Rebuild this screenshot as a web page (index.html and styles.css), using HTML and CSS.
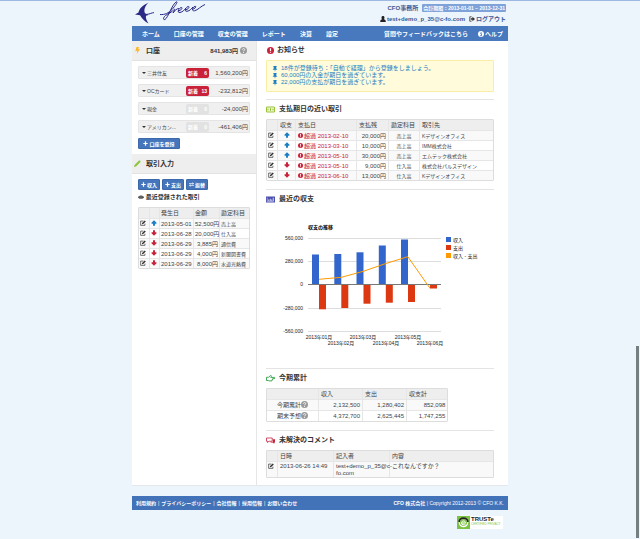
FILE: index.html
```html
<!doctype html>
<html lang="ja">
<head>
<meta charset="utf-8">
<title>freee</title>
<link rel="stylesheet" href="styles.css">
</head>

<body>
<!-- アイコン -->
<svg class="sprite" width="0" height="0">
	<symbol id="i-help" viewBox="0 0 14 14"><circle cx="7" cy="7" r="7" fill="currentColor"/><path d="M4.6 5.4C4.7 2.4 9.5 2.5 9.4 5.3 9.3 7 7.1 6.8 7.1 8.6" fill="none" stroke="#fff" stroke-width="1.8"/><circle cx="7.1" cy="10.9" r="1.1" fill="#fff"/></symbol>
	<symbol id="i-info" viewBox="0 0 14 14"><circle cx="7" cy="7" r="7" fill="#fff"/><path d="M5.2 6h2.9v4.5M5 10.8h4.4M6.2 3.4h2" fill="none" stroke="#4878be" stroke-width="2"/></symbol>
	<symbol id="i-alert" viewBox="0 0 14 14"><circle cx="7" cy="7" r="7" fill="#c9213a"/><path d="M7 2.5v5.4M7 9.4v2.2" stroke="#fff" stroke-width="2.4"/></symbol>
	<symbol id="i-bolt" viewBox="0 0 14 14"><path d="M5 0h5L8.500 4.500 12 4 5.500 14 6.500 7.500 2.500 8.500z" fill="#fbb829"/></symbol>
	<symbol id="i-pencil" viewBox="0 0 14 14"><path d="M0 14l1-4L9.500 1.500C10.500.4 11.500.6 12.500 1.600c1 1 1 2 0 3L4 13z" fill="#8cc63f"/></symbol>
	<symbol id="i-edit" viewBox="0 0 14 14"><path d="M11.500 8.500V12.500H1.500V2.500H8" fill="none" stroke="#333" stroke-width="1.600"/><path d="M4.500 10l.5-3L11 1l2.500 2.500L7.500 9.500z" fill="#333"/></symbol>
	<symbol id="i-up" viewBox="0 0 14 14"><path d="M7 .5l6.500 6.500-1.500 2H9.300V13.500H4.700V9H2L.5 7z" fill="#1b7fc4"/></symbol>
	<symbol id="i-down" viewBox="0 0 14 14"><path d="M7 13.500l6.500-6.500-1.500-2H9.300V.5H4.700V5H2L.5 7z" fill="#c9213a"/></symbol>
	<symbol id="i-plus" viewBox="0 0 14 14"><path d="M7 1v12M1 7h12" stroke="#fff" stroke-width="3.400"/></symbol>
	<symbol id="i-swap" viewBox="0 0 14 14"><path d="M0 4.500h10M14 9.500H4" stroke="#fff" stroke-width="2"/><path d="M9.500 1l4.500 3.500L9.500 8zM4.500 6L0 9.500 4.500 13z" fill="#fff"/></symbol>
	<symbol id="i-eye" viewBox="0 0 14 14"><path d="M0 7.500C3 2.500 11 2.500 14 7.500 11 12.500 3 12.500 0 7.500z" fill="#333"/><circle cx="7" cy="7" r="3" fill="none" stroke="#fff" stroke-width=".8"/></symbol>
	<symbol id="i-pin" viewBox="0 0 14 14"><path d="M3 0h8v1.500H10V6l2.500 3H8L7 14 6 9H1.500L4 6V1.500H3z" fill="#1b7fc4"/></symbol>
	<symbol id="i-user" viewBox="0 0 14 14"><path d="M7 0c4.500 0 4 6 1.800 7.500C12 8.200 13.500 9 13.500 14H.5C.5 9 2 8.200 5.200 7.500 3 6 2.500 0 7 0z" fill="#222"/></symbol>
	<symbol id="i-out" viewBox="0 0 14 14"><path d="M6 1.800H1.800v10.400H6" fill="none" stroke="#333" stroke-width="1.800"/><path d="M4 5h4V2l6 5-6 5V9H4z" fill="#333"/></symbol>
	<symbol id="i-money" viewBox="0 0 18 14"><path d="M1 2h16v10H1z" fill="#eef7d6" stroke="#9cc43a" stroke-width="2"/><path d="M9 4.500v5M4 5.500v3M14 5.500v3" fill="none" stroke="#8cb92c" stroke-width="2"/></symbol>
	<symbol id="i-chart" viewBox="0 0 18 14"><path d="M0 1h18v12H0z" fill="#4b4fae"/><path d="M2.500 3v8h13" fill="none" stroke="#c9cbee" stroke-width="1.200"/><path d="M5.500 10V7M8.500 10V5.500M11.500 10V7M14.500 10V3.500" stroke="#dfe0f6" stroke-width="1.800"/></symbol>
	<symbol id="i-hand" viewBox="0 0 18 14"><path d="M1 4.500h4L9 1.200c1.600-.6 2.200.8 1.500 2L9.500 4.800H17v2.600h-4v2.200h-1.200v2.200H6L4.500 11H1z" fill="none" stroke="#2fa044" stroke-width="1.800" stroke-linejoin="round"/></symbol>
	<symbol id="i-talk" viewBox="0 0 18 14"><path d="M1 2h11.500v6.500H6L3 11V8.500H1z" fill="none" stroke="#c9213a" stroke-width="1.600"/><path d="M14 4.500h4V11h-1.500v2.500L13 11H8.500l1.500-1.500h4z" fill="#c9213a"/></symbol>
</svg>

<div class="page">
	<div class="header">
		<a class="logo" href="#" aria-label="freee">
			<svg viewBox="0 0 72 24" width="72" height="24" fill="none" stroke="#2a2a86">
				<path d="M14.500 1.500C8.500 4.500 5 8 4.500 11.500L1 13.500l5 .8c2 3.500 5 6.500 8.500 8.200-2-3.500-3-5.500-2.500-7.800l2.500-.8-3.500-1.600C9.500 9 11 5 14.500 1.500z" fill="#2a2a86" stroke="none"/>
				<path d="M12 13.500c4-.3 6-2 8-1.800M26 13.500c5 .5 8.500-1.500 12-5C42 4 44 .5 42.500.8 38 3 34 17 31 18.500c-2 .8-2-2 .5-4C34 12.500 38 11.500 40 8.500c1.500-1 0 2-1 3.500 2-3 4-4.500 6-4.500"/>
				<path d="M44 10c4-.5 5-4 3-3.500-3 1.500-4 5.500-1 5 3-.5 4.500-3 6-4.500M51 9c4-.5 5-4 3-3.500-3 1.500-4 5-1 4.800 3-.3 4.500-3 6-4.300M58 8.500c4-1 4.500-3.500 3-3.200-3 1.200-3.500 5-.5 4.500C64 9 67 5 71 3.500"/>
			</svg>
		</a>
		<div class="account">
			<div class="account_line">
				<span class="office">CFO事務所</span>
				<span class="period">会計期間：2013-01-01 ~ 2013-12-31</span>
			</div>
			<div class="account_line">
				<a class="user" href="#"><svg class="icon"><use href="#i-user"/></svg> test+demo_p_35@c-fo.com</a>
				<a class="logout" href="#"><svg class="icon"><use href="#i-out"/></svg> ログアウト</a>
			</div>
		</div>
	</div>

	<div class="nav">
		<a href="#">ホーム</a>
		<a href="#">口座の管理</a>
		<a href="#">収支の管理</a>
		<a href="#">レポート</a>
		<a href="#">決算</a>
		<a href="#">設定</a>
		<a class="nav_right" href="#">質問やフィードバックはこちら</a>
		<a class="nav_help" href="#"><svg class="icon"><use href="#i-info"/></svg>ヘルプ</a>
	</div>

	<div class="main">
		<div class="sidebar">
			<h2 class="side_title"><svg class="icon_side"><use href="#i-bolt"/></svg>口座 <span class="total">841,983円</span><svg class="icon_help"><use href="#i-help"/></svg></h2>
			<div class="side_body">
				<ul class="accounts">
					<li><button class="toggle">三井住友</button><span class="new">新着 <b>6</b></span><span class="sum">1,560,200円</span></li>
					<li><button class="toggle">OCカード</button><span class="new">新着 <b>13</b></span><span class="sum">-232,812円</span></li>
					<li><button class="toggle">現金</button><span class="new none">新着 <b>0</b></span><span class="sum">-24,000円</span></li>
					<li><button class="toggle">アメリカン...</button><span class="new none">新着 <b>0</b></span><span class="sum">-461,406円</span></li>
				</ul>
				<button class="btn btn_add"><svg class="icon_btn"><use href="#i-plus"/></svg>口座を登録</button>
			</div>
			<h2 class="side_title"><svg class="icon_side"><use href="#i-pencil"/></svg>取引入力</h2>
			<div class="side_body">
				<div class="btns">
					<button class="btn"><svg class="icon_btn"><use href="#i-plus"/></svg>収入</button>
					<button class="btn"><svg class="icon_btn"><use href="#i-plus"/></svg>支出</button>
					<button class="btn"><svg class="icon_btn"><use href="#i-swap"/></svg>振替</button>
				</div>
				<h3 class="recent"><svg class="icon"><use href="#i-eye"/></svg> 最近登録された取引</h3>
				<table class="list">
					<colgroup><col class="c10"><col class="c10"><col class="c34"><col class="c26"><col></colgroup>
					<tr><th></th><th></th><th>発生日</th><th>金額</th><th>勘定科目</th></tr>
					<tr><td><svg class="icon"><use href="#i-edit"/></svg></td><td><svg class="icon"><use href="#i-up"/></svg></td><td>2013-05-01</td><td class="num">52,500円</td><td class="jp">売上高</td></tr>
					<tr><td><svg class="icon"><use href="#i-edit"/></svg></td><td><svg class="icon"><use href="#i-down"/></svg></td><td>2013-06-28</td><td class="num">20,000円</td><td class="jp">仕入高</td></tr>
					<tr><td><svg class="icon"><use href="#i-edit"/></svg></td><td><svg class="icon"><use href="#i-down"/></svg></td><td>2013-06-29</td><td class="num">3,885円</td><td class="jp">通信費</td></tr>
					<tr><td><svg class="icon"><use href="#i-edit"/></svg></td><td><svg class="icon"><use href="#i-down"/></svg></td><td>2013-06-29</td><td class="num">4,000円</td><td class="jp">新聞図書費</td></tr>
					<tr><td><svg class="icon"><use href="#i-edit"/></svg></td><td><svg class="icon"><use href="#i-down"/></svg></td><td>2013-06-29</td><td class="num">8,000円</td><td class="jp">水道光熱費</td></tr>
				</table>
			</div>
		</div>

		<div class="content">
			<div class="section">
				<h2 class="title"><svg class="icon_title small"><use href="#i-alert"/></svg>お知らせ</h2>
				<ul class="notice">
					<li><svg class="icon"><use href="#i-pin"/></svg><a href="#">18件が登録待ち：「自動で経理」から登録をしましょう。</a></li>
					<li><svg class="icon"><use href="#i-pin"/></svg><a href="#">60,000円の入金が期日を過ぎています。</a></li>
					<li><svg class="icon"><use href="#i-pin"/></svg><a href="#">22,000円の支払が期日を過ぎています。</a></li>
				</ul>
			</div>

			<div class="section">
				<h2 class="title"><svg class="icon_title"><use href="#i-money"/></svg>支払期日の近い取引</h2>
				<table class="list">
					<colgroup><col class="c10"><col class="c18"><col class="c61"><col class="c32"><col class="c31"><col></colgroup>
					<tr><th></th><th>収支</th><th>支払日</th><th>支払残</th><th>勘定科目</th><th>取引先</th></tr>
					<tr><td><svg class="icon"><use href="#i-edit"/></svg></td><td class="mid"><svg class="icon"><use href="#i-up"/></svg></td><td class="over"><svg class="icon"><use href="#i-alert"/></svg>超過 2013-02-10</td><td class="num">20,000円</td><td class="jp mid">売上高</td><td class="jp">Kデザインオフィス</td></tr>
					<tr><td><svg class="icon"><use href="#i-edit"/></svg></td><td class="mid"><svg class="icon"><use href="#i-up"/></svg></td><td class="over"><svg class="icon"><use href="#i-alert"/></svg>超過 2013-03-10</td><td class="num">10,000円</td><td class="jp mid">売上高</td><td class="jp">IMM株式会社</td></tr>
					<tr><td><svg class="icon"><use href="#i-edit"/></svg></td><td class="mid"><svg class="icon"><use href="#i-up"/></svg></td><td class="over"><svg class="icon"><use href="#i-alert"/></svg>超過 2013-05-10</td><td class="num">30,000円</td><td class="jp mid">売上高</td><td class="jp">エムテック株式会社</td></tr>
					<tr><td><svg class="icon"><use href="#i-edit"/></svg></td><td class="mid"><svg class="icon"><use href="#i-down"/></svg></td><td class="over"><svg class="icon"><use href="#i-alert"/></svg>超過 2013-05-10</td><td class="num">9,000円</td><td class="jp mid">仕入高</td><td class="jp">株式会社パルスデザイン</td></tr>
					<tr><td><svg class="icon"><use href="#i-edit"/></svg></td><td class="mid"><svg class="icon"><use href="#i-down"/></svg></td><td class="over"><svg class="icon"><use href="#i-alert"/></svg>超過 2013-06-10</td><td class="num">13,000円</td><td class="jp mid">仕入高</td><td class="jp">Kデザインオフィス</td></tr>
				</table>
			</div>

			<div class="section">
				<h2 class="title"><svg class="icon_title"><use href="#i-chart"/></svg>最近の収支</h2>
				<svg class="chart" viewBox="0 0 228 151">
					<text class="chart_title" x="42" y="20">収支の推移</text>
					<!-- 目盛り線 -->
					<path d="M42 29.500h133M42 52.500h133M42 99.500h133M42 122.500h133" stroke="#ddd"/>
					<!-- 収入 -->
					<g fill="#3366cc">
						<rect x="46" y="45.500" width="7" height="30"/>
						<rect x="68.300" y="45" width="7" height="30.500"/>
						<rect x="90.500" y="43.300" width="7" height="32.200"/>
						<rect x="112.800" y="36.500" width="7" height="39"/>
						<rect x="135" y="30.500" width="7" height="45"/>
					</g>
					<!-- 支出 -->
					<g fill="#dc3912">
						<rect x="53" y="75.500" width="7" height="24.800"/>
						<rect x="75.300" y="75.500" width="7" height="23.500"/>
						<rect x="97.500" y="75.500" width="7" height="19.200"/>
						<rect x="119.800" y="75.500" width="7" height="18.200"/>
						<rect x="142" y="75.500" width="7" height="17.500"/>
						<rect x="164" y="75.500" width="7" height="4"/>
					</g>
					<path d="M42 75.500h133" stroke="#777"/>
					<path d="M53 70.300l22.300-2 22-6 22-7.600 22.500-7L164 79.300" fill="none" stroke="#ff9900"/>
					<g text-anchor="end">
						<text x="37" y="31">560,000</text>
						<text x="37" y="54">280,000</text>
						<text x="37" y="77">0</text>
						<text x="37" y="101">-280,000</text>
						<text x="37" y="124">-560,000</text>
					</g>
					<g text-anchor="middle">
						<text x="53" y="130">2013年01月</text>
						<text x="75" y="136">2013年02月</text>
						<text x="97" y="130">2013年03月</text>
						<text x="120" y="136">2013年04月</text>
						<text x="142" y="130">2013年05月</text>
						<text x="164" y="136">2013年06月</text>
					</g>
					<rect x="180" y="28" width="5" height="5" fill="#3366cc"/><text x="187" y="33">収入</text>
					<rect x="180" y="36" width="5" height="5" fill="#dc3912"/><text x="187" y="41">支出</text>
					<rect x="180" y="44" width="5" height="5" fill="#ff9900"/><text x="187" y="49">収入 - 支出</text>
				</svg>
			</div>

			<div class="section">
				<h2 class="title"><svg class="icon_title"><use href="#i-hand"/></svg>今期累計</h2>
				<table class="list totals">
					<colgroup><col class="c51"><col class="c44"><col class="c44"><col></colgroup>
					<tr><th></th><th>収入</th><th>支出</th><th>収支計</th></tr>
					<tr><td class="name">今期累計<svg class="icon_help"><use href="#i-help"/></svg></td><td class="num">2,132,500</td><td class="num">1,280,402</td><td class="num">852,098</td></tr>
					<tr><td class="name">期末予想<svg class="icon_help"><use href="#i-help"/></svg></td><td class="num">4,372,700</td><td class="num">2,625,445</td><td class="num">1,747,255</td></tr>
				</table>
			</div>

			<div class="section">
				<h2 class="title"><svg class="icon_title"><use href="#i-talk"/></svg>未解決のコメント</h2>
				<table class="list comments">
					<colgroup><col class="c10"><col class="c56"><col class="c56"><col></colgroup>
					<tr><th></th><th>日時</th><th>記入者</th><th>内容</th></tr>
					<tr><td><svg class="icon"><use href="#i-edit"/></svg></td><td>2013-06-26 14:49</td><td>test+demo_p_35@c-fo.com</td><td>これなんですか？</td></tr>
				</table>
			</div>
		</div>
	</div>

	<div class="footer">
		<div class="links"><a href="#">利用規約</a>|<a href="#">プライバシーポリシー</a>|<a href="#">会社情報</a>|<a href="#">採用情報</a>|<a href="#">お問い合わせ</a></div>
		<div><a href="#">CFO 株式会社</a> | Copyright 2012-2013 © CFO K.K.</div>
	</div>
	<div class="seal">
		<svg viewBox="0 0 13 13" width="13" height="13"><path d="M0 0h13v13H0z" fill="#7cc142"/><circle cx="6.500" cy="6.500" r="4.200" fill="none" stroke="#fff" stroke-width="1.200"/><path d="M2 6C3 .8 10 .8 11 6" fill="none" stroke="#222" stroke-width="1.600"/><path d="M4.500 7h4C8.500 4.300 4.700 4.300 4.500 7c.2 2.200 2.500 2.400 4 1.300" fill="none" stroke="#fff"/></svg>
		<div class="seal_text"><b>TRUSTe</b><span>CERTIFIED PRIVACY</span></div>
	</div>
</div>
<div class="scroll"></div>
</body>
</html>
```
FILE: styles.css
```css
* {margin: 0; padding: 0; box-sizing: border-box;}
body {
  background: #edf5fc;
  border-top: 1px solid #9db9e2;
  color: #444;
  font: 6px/8px "Liberation Sans", "Noto Sans CJK JP", sans-serif;
}
a {color: inherit; text-decoration: none;}
ul {list-style: none;}
button {
  font: inherit;
  color: inherit;
  background: none;
  border: 0;
}
svg {flex: none;}
.sprite {position: absolute;}
.icon {width: 6px; height: 6px; vertical-align: middle;}
.icon_help {width: 7px; height: 7px; color: #999; vertical-align: middle;}
.page {
  max-width: 376px;
  margin: 0 auto;
}

/* header */
.header {
  display: flex;
  justify-content: space-between;
  height: 25px;
  padding: 0 2px;
}
.logo {display: block; height: 24px;}
.account {
  font-weight: bold;
  color: #3a5795;
  padding-top: 1px;
}
.account_line {
  display: flex;
  justify-content: flex-end;
  align-items: center;
  gap: 4px;
  height: 11px;
}
.office {font-size: 6px;}
.user, .logout {display: flex; align-items: center; gap: 1px;}
.period {
  background: #7fa3d9;
  color: #fff;
  font-size: 5px;
  padding: 0 1px;
  border-radius: 1px;
}
.nav {
  display: flex;
  align-items: center;
  gap: 14px;
  height: 15px;
  padding: 0 5px 0 10px;
  background: #4878be;
  color: #fff;
  font-weight: bold;
}
.nav_right {margin-left: auto;}
.nav_help {display: flex; align-items: center; gap: 1px; margin-left: -4px;}

.main {
  display: flex;
  background: #fff;
  border-bottom: 1px solid #e4e8ec;
}

/* sidebar */
.sidebar {
  width: 125px;
  border-right: 1px solid #e6e6e6;
}
.side_title {
  display: flex;
  align-items: center;
  height: 20px;
  padding: 0 9px 0 2px;
  background: #eee;
  border-bottom: 1px solid #e2e2e2;
  font-size: 7px;
  color: #333;
}
.icon_side {width: 7px; height: 7px; margin-right: 5px;}
.total {
  margin-left: auto;
  margin-right: 2px;
  font-size: 6px;
}
.side_body {padding: 5px 6px;}
.accounts li {
  display: flex;
  align-items: center;
  height: 13px;
  margin-bottom: 5px;
  padding: 0 1px 0 3px;
  background: #f0f0f0;
  border: 1px solid #e4e4e4;
  border-radius: 1px;
}
.toggle {
  display: flex;
  align-items: center;
  width: 44px;
  font-size: 5px;
  white-space: nowrap;
}
.toggle::before {
  content: "";
  margin-right: 1px;
  border: 2px solid transparent;
  border-top-color: #333;
  border-bottom: 0;
}
.new {
  display: flex;
  justify-content: space-between;
  width: 23px;
  height: 10px;
  padding: 0 2px;
  background: #c9213a;
  border-radius: 2px;
  color: #fff;
  font-size: 5px;
  font-weight: bold;
  line-height: 10px;
}
.new.none {background: #e2e2e2;}
.sum {margin-left: auto;}
.btn {
  display: flex;
  align-items: center;
  justify-content: center;
  gap: 1px;
  width: 22px;
  height: 11px;
  background: #4575ba;
  border: 1px solid #3c69ab;
  border-radius: 1px;
  color: #fff;
  font-size: 5px;
  font-weight: bold;
}
.btn_add {width: 42px;}
.icon_btn {width: 5px; height: 5px;}
.btns {display: flex; gap: 2px;}
.recent {
  margin: 3px 0 6px;
  font-size: 6px;
  color: #333;
}

/* tables */
.list {
  width: 100%;
  table-layout: fixed;
  border: 1px solid #ddd;
  border-radius: 1px;
  border-spacing: 0;
}
.list th, .list td {
  height: 10px;
  padding: 0 2px;
  border-left: 1px solid #e6e6e6;
  border-top: 1px solid #e6e6e6;
  text-align: left;
  font-weight: normal;
  white-space: nowrap;
  vertical-align: middle;
}
.list th {background: #eee; border-top: 0;}
.list th:first-child, .list td:first-child {border-left: 0;}
.list td:first-child {padding-left: 1px;}
.sidebar .list td, .sidebar .list th {padding: 0 1px;}
.list tr:nth-child(even) td {background: #f9f9f9;}
.list .icon, .list .icon_help {display: inline-block; margin-top: -1px;}
.list td.num {text-align: right;}
.list td.name {text-align: right; padding-right: 10px;}
.list td.mid {text-align: center;}
.list td.jp {font-size: 5px;}
.list td.over {color: #c9213a;}
.list .over .icon {width: 5px; height: 5px; margin-right: 1px;}
.c10 {width: 10px;}
.c18 {width: 18px;}
.c26 {width: 26px;}
.c31 {width: 31px;}
.c32 {width: 32px;}
.c34 {width: 34px;}
.c44 {width: 44px;}
.c51 {width: 51px;}
.c56 {width: 56px;}
.c61 {width: 61px;}
.list.totals {width: 80%;}
.totals td {height: 11px;}
.list.comments td {
  line-height: 7px;
  vertical-align: top;
  white-space: normal;
  padding-top: 1px;
}

/* content */
.content {
  flex: 1;
  min-width: 0;
  padding: 0 14px 0 9px;
}
.section {
  padding: 4px 0 8px;
  border-top: 1px solid #e4e4e4;
}
.section:first-child {border-top: 0; padding-bottom: 7px;}
.section:last-child {padding-bottom: 7px;}
.title {
  display: flex;
  align-items: center;
  gap: 4px;
  height: 10px;
  margin-bottom: 5px;
  font-size: 7px;
  color: #333;
}
.icon_title {width: 9px; height: 7px;}
.icon_title.small {width: 7px; margin: 0 -1px 0 1px;}
.notice {
  padding: 4px 5px 5px;
  background: #fffbdb;
  border: 1px solid #f8eda4;
  border-radius: 1px;
  color: #1b7fc4;
  line-height: 7px;
}
.notice li {display: flex; align-items: center; gap: 3px; height: 7px;}
.chart {display: block; width: 100%;}
.chart text {font-size: 5px; fill: #222;}
.chart .chart_title {font-weight: bold; fill: #000;}

/* footer */
.footer {
  display: flex;
  align-items: center;
  justify-content: space-between;
  height: 14px;
  margin-top: 10px;
  padding: 0 4px;
  background: #4272b8;
  color: #fff;
  font-size: 5px;
}
.footer a {font-weight: bold;}
.links {display: flex; gap: 2px;}
.seal {
  display: flex;
  width: 46px;
  margin: 6px 5px 0 auto;
  background: #fff;
}
.seal_text {padding-left: 1px; line-height: 6px;}
.seal_text b {display: block; color: #222;}
.seal_text span {
  display: block;
  font-size: 3px;
  line-height: 4px;
  color: #8cc63f;
  white-space: nowrap;
}
.scroll {
  position: fixed;
  right: 1px;
  top: 346px;
  bottom: 1px;
  width: 3px;
  background: #757f82;
}
```
